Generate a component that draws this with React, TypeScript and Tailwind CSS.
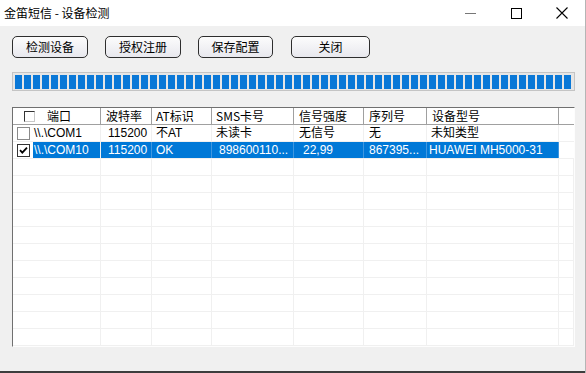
import React from "react";

const cols = [
  { w: 88, label: "端口" },
  { w: 51, label: "波特率" },
  { w: 60, label: "AT标识" },
  { w: 82, label: "SMS卡号" },
  { w: 70, label: "信号强度" },
  { w: 63, label: "序列号" },
  { w: 132, label: "设备型号" },
];

const rows = [
  { checked: false, sel: false, cells: ["\\\\.\\COM1", "115200", "不AT", "未读卡", "无信号", "无", "未知类型"], pads: [4, 7, 4, 4, 5, 5, 4] },
  { checked: true, sel: true, cells: ["\\\\.\\COM10", "115200", "OK", "898600110...", "22,99", "867395...", "HUAWEI MH5000-31"], pads: [4, 7, 4, 7, 9, 5, 2] },
];

function CheckBox({ checked, header }: { checked?: boolean; header?: boolean }) {
  if (header) {
    return (
      <div className="w-[11px] h-[11px] border-l border-t border-l-[#333] border-t-[#333] border-r border-b border-r-[#c8c8c8] border-b-[#c8c8c8] bg-white" />
    );
  }
  return (
    <div className={`w-[13px] h-[13px] border ${checked ? "border-[#333]" : "border-[#8a8a8a]"} bg-white flex items-center justify-center`}>
      {checked && (
        <svg width="9" height="9" viewBox="0 0 9 9">
          <path d="M1 4.2 L3.3 6.6 L8 1.6" stroke="#000" strokeWidth="1.8" fill="none" />
        </svg>
      )}
    </div>
  );
}

export default function App() {
  const fillerRows = Array.from({ length: 11 });
  return (
    <div
      className="w-[586px] h-[373px] bg-[#f0f0f0] flex flex-col overflow-hidden text-[12px] text-black relative border-r border-r-[#b5b5b5]"
      style={{ fontFamily: '"Liberation Sans", "Noto Sans CJK SC", sans-serif' }}
    >
      {/* title bar */}
      <div className="h-[26px] bg-white flex items-center justify-between shrink-0">
        <span className="pl-[4px] text-[12px] leading-none" style={{ fontFamily: '"Noto Sans CJK SC", sans-serif' }}>
          金笛短信 - 设备检测
        </span>
        <div className="flex h-full">
          <div className="w-[46px] flex items-center justify-center">
            <div className="w-[11px] h-px bg-[#777]" />
          </div>
          <div className="w-[46px] flex items-center justify-center">
            <div className="w-[11px] h-[11px] border border-[#000]" />
          </div>
          <div className="w-[46px] flex items-center justify-center">
            <svg width="12" height="12" viewBox="0 0 12 12">
              <path d="M0.5 0.5 L11.5 11.5 M11.5 0.5 L0.5 11.5" stroke="#000" strokeWidth="1.1" />
            </svg>
          </div>
        </div>
      </div>

      {/* buttons */}
      <div className="flex mt-[10px] pl-[12px] h-[22px] shrink-0" style={{ fontFamily: '"Noto Sans CJK SC", sans-serif' }}>
        {[
          { t: "检测设备", w: "w-[76px]", m: "" },
          { t: "授权注册", w: "w-[76px]", m: "ml-[17px]" },
          { t: "保存配置", w: "w-[75px]", m: "ml-[17px]" },
          { t: "关闭", w: "w-[79px]", m: "ml-[18px]" },
        ].map((b) => (
          <div
            key={b.t}
            className={`${b.w} ${b.m} h-[22px] border border-[#2e2e2e] rounded-[5px] bg-gradient-to-b from-[#fcfcfc] to-[#e8e8ee] flex items-center justify-center text-[12px] leading-none`}
          >
            {b.t}
          </div>
        ))}
      </div>

      {/* progress */}
      <div className="mt-[14px] ml-[12px] w-[563px] h-[19px] border border-[#c4c4c4] bg-[#e6e6e6] flex items-center pl-[2px] gap-[2px] overflow-hidden shrink-0">
        {Array.from({ length: 62 }).map((_, i) => (
          <div key={i} className="w-[7px] h-[14px] bg-[#0a78d7] shrink-0" />
        ))}
      </div>

      {/* list view */}
      <div className="mt-[16px] ml-[12px] w-[563px] h-[240px] border-l border-t border-l-[#707070] border-t-[#707070] border-r border-b border-r-[#fdfdfd] border-b-[#fdfdfd] bg-white flex flex-col overflow-hidden shrink-0">
        {/* header */}
        <div className="flex h-[17px] border-b border-b-[#a0a0a0] shrink-0">
          {cols.map((c, i) => (
            <div
              key={c.label}
              className="h-full flex items-center border-r border-r-[#a0a0a0] shrink-0"
              style={{ width: c.w, fontFamily: '"Noto Sans CJK SC", sans-serif' }}
            >
              {i === 0 ? (
                <div className="flex items-center pl-[11px] gap-[12px]">
                  <CheckBox header />
                  <span className="leading-none">{c.label}</span>
                </div>
              ) : (
                <span className={`leading-none ${i === 2 || i === 3 ? "pl-[4px]" : "pl-[5px]"}`}>{c.label}</span>
              )}
            </div>
          ))}
          <div className="flex-1" />
        </div>

        {/* data rows */}
        {rows.map((r, ri) => (
          <div key={ri} className="flex h-[17px] shrink-0 border-b border-b-[#f0f0f0]">
            {cols.map((c, i) => (
              <div
                key={i}
                className={`h-full flex items-center shrink-0 ${
                  r.sel && i > 0 ? "bg-[#0078d7] text-white border-r border-r-[#3f97e0]" : "border-r border-r-[#f0f0f0]"
                }`}
                style={{ width: c.w }}
              >
                {i === 0 ? (
                  <div className="flex items-center h-full w-full">
                    <div className="pl-[4px] pr-[3px]">
                      <CheckBox checked={r.checked} />
                    </div>
                    <div className={`flex-1 h-full flex items-center pl-[1px] ${r.sel ? "bg-[#0078d7] text-white" : ""}`}>
                      {r.cells[0]}
                    </div>
                  </div>
                ) : (
                  <span className="whitespace-nowrap leading-none" style={{ paddingLeft: r.pads[i], fontFamily: '"Liberation Sans", "Noto Sans CJK SC", sans-serif' }}>
                    {r.cells[i]}
                  </span>
                )}
              </div>
            ))}
            <div className="flex-1" />
          </div>
        ))}

        {/* filler rows */}
        {fillerRows.map((_, ri) => (
          <div key={ri} className="flex h-[17px] shrink-0 border-b border-b-[#f0f0f0]">
            {cols.map((c, i) => (
              <div key={i} className="h-full border-r border-r-[#f0f0f0] shrink-0" style={{ width: c.w }} />
            ))}
            <div className="w-[15px] h-full border-r border-r-[#f0f0f0]" />
          </div>
        ))}
      </div>

      <div className="flex-1" />
      <div className="h-[2px] bg-[#3d3d3d] shrink-0" />
    </div>
  );
}
